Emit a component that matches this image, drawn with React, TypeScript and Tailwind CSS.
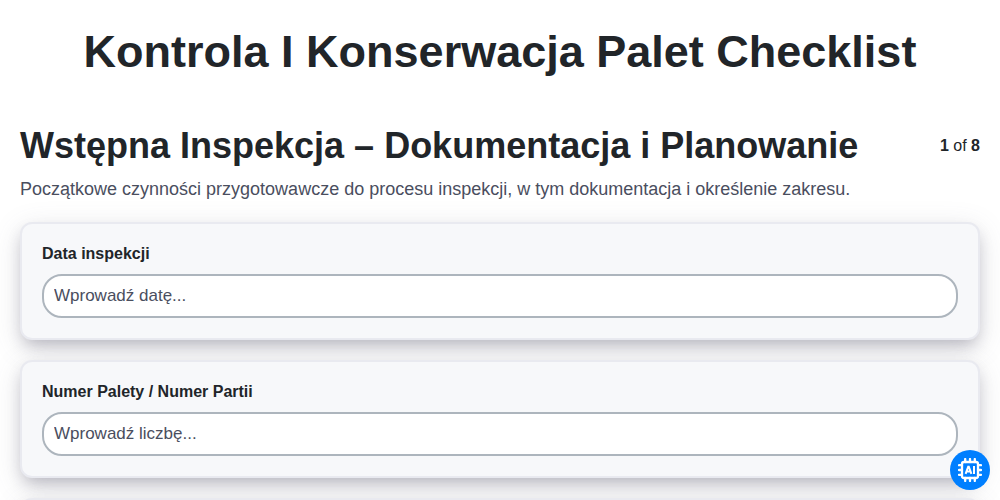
type Question = {
  id: string;
  label: string;
  placeholder: string;
};

const questions: Question[] = [
  { id: "inspection-date", label: "Data inspekcji", placeholder: "Wprowadź datę..." },
  { id: "pallet-number", label: "Numer Palety / Numer Partii", placeholder: "Wprowadź liczbę..." },
];

const cardClass =
  "flex flex-col gap-2.5 rounded-xl border-2 border-[#e9eaf0] bg-[#f7f8fa] p-5 shadow-[0_7px_29px_0_rgba(100,100,115,0.18),0_8px_16px_-4px_rgba(40,35,65,0.28)]";

function QuestionCard({ id, label, placeholder }: Question) {
  return (
    <div className={cardClass}>
      <label htmlFor={id} className="text-base leading-5 font-bold">
        {label}
      </label>
      <input
        id={id}
        type="text"
        placeholder={placeholder}
        className="h-11 w-full rounded-[20px] border-2 border-[#adb5bd] bg-white px-2.5 text-[17px] placeholder:text-[#4a4e5e] placeholder:opacity-100"
      />
    </div>
  );
}

function ChipIcon() {
  return (
    <svg viewBox="0 0 24 24" className="size-6" fill="none" stroke="currentColor" aria-hidden="true">
      <rect x="4" y="4" width="16" height="16" rx="2" strokeWidth="2.3" />
      <path
        d="M7.2 1v3M12 1v3M16.8 1v3M7.2 20v3M12 20v3M16.8 20v3M1 7.2h3M1 12h3M1 16.8h3M20 7.2h3M20 12h3M20 16.8h3"
        strokeWidth="2.3"
        strokeLinecap="round"
      />
      <path d="M7.6 15.9l2.6-7.2h.6l2.6 7.2M8.6 13.6h3.8M16 8v8" strokeWidth="2" />
    </svg>
  );
}

export default function App() {
  return (
    <div className="h-screen overflow-hidden bg-white font-['Liberation_Sans',Arial,sans-serif] text-[#212529]">
      <main className="flex flex-col px-5 pt-[25px]">
        <h1 className="text-center text-[45px] leading-[54px] font-bold">
          Kontrola I Konserwacja Palet Checklist
        </h1>
        <header className="mt-[45px] flex items-center justify-between">
          <h2 className="text-[36px] leading-[43px] font-bold">
            Wstępna Inspekcja – Dokumentacja i Planowanie
          </h2>
          <p className="text-base">
            <b>1</b> of <b>8</b>
          </p>
        </header>
        <p className="mt-2 text-lg leading-7 text-[#4a4e5e]">
          Początkowe czynności przygotowawcze do procesu inspekcji, w tym dokumentacja i określenie zakresu.
        </p>
        <form className="mt-[19px] flex flex-col gap-5">
          {questions.map((question) => (
            <QuestionCard key={question.id} {...question} />
          ))}
          <div className={cardClass} />
        </form>
      </main>
      <button
        type="button"
        aria-label="AI"
        className="fixed right-2.5 bottom-2.5 flex size-10 items-center justify-center rounded-full bg-[#007fff] text-white"
      >
        <ChipIcon />
      </button>
    </div>
  );
}
